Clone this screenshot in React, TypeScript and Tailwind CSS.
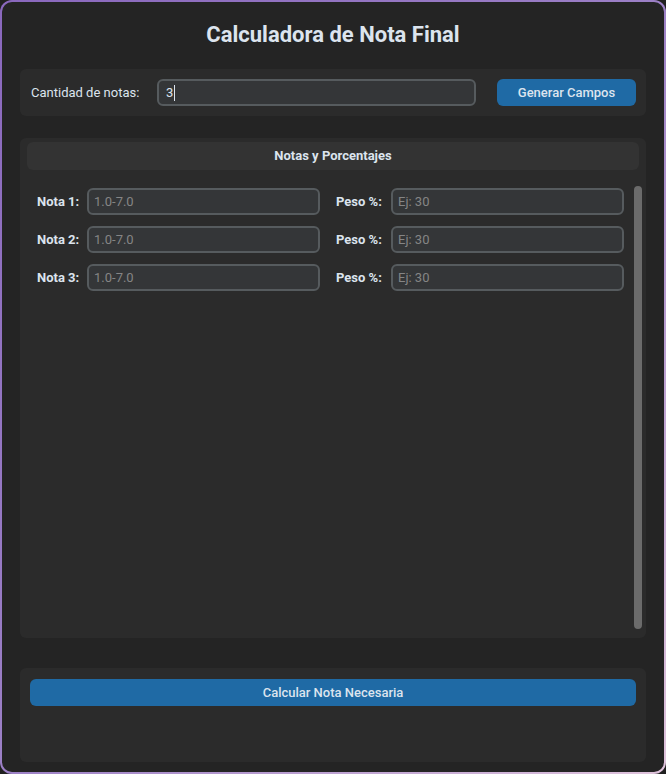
import React from "react";

const font = { fontFamily: "Roboto, 'Noto Sans', 'Liberation Sans', sans-serif" };

function Row({ n }: { n: number }) {
  return (
    <div className="flex h-[27px] items-center">
      <div className="w-[50px] pl-[17px] box-content text-[13px] font-bold text-[#dce4ee] whitespace-nowrap">Nota {n}:</div>
      <div className="ml-0 flex h-[27px] w-[233px] items-center rounded-[6px] border-2 border-[#565b5e] bg-[#343638] pl-[5px] text-[13px] text-[#858585]">1.0-7.0</div>
      <div className="ml-[16px] w-[55px] text-[13px] font-bold text-[#dce4ee] whitespace-nowrap">Peso %:</div>
      <div className="flex h-[27px] w-[233px] items-center rounded-[6px] border-2 border-[#565b5e] bg-[#343638] pl-[5px] text-[13px] text-[#858585]">Ej: 30</div>
    </div>
  );
}

export default function App() {
  return (
    <div className="h-[774px] w-[666px] bg-[#202020]" style={font}>
      <div className="h-full w-full rounded-[12px] bg-gradient-to-br from-[#8a68bd] via-[#9c80c6] to-[#e0c4dc] p-[2px]">
        <div className="flex h-full w-full flex-col rounded-[10px] bg-[#242424] px-[18px]">
          <div className="mt-[18px] flex h-[28px] items-center justify-center text-[22px] font-bold text-[#dce4ee]">
            Calculadora de Nota Final
          </div>

          <div className="mt-[21px] flex h-[47px] items-center rounded-[6px] bg-[#2b2b2b] px-[10px]">
            <div className="w-[127px] pl-[1px] text-[13px] text-[#dce4ee] whitespace-nowrap">Cantidad de notas:</div>
            <div className="flex h-[27px] w-[319px] items-center rounded-[6px] border-2 border-[#565b5e] bg-[#343638] pl-[7px] text-[13px] text-[#dce4ee]">
              3<span className="ml-[1px] inline-block h-[16px] w-[1px] bg-[#dce4ee]" />
            </div>
            <div className="ml-[21px] flex h-[27px] w-[139px] items-center justify-center rounded-[6px] bg-[#1f6aa5] text-[13px] font-medium text-[#dce4ee]">
              Generar Campos
            </div>
          </div>

          <div className="mt-[22px] flex h-[500px] flex-col rounded-[6px] bg-[#2b2b2b] pt-[4px]">
            <div className="mx-[7px] flex h-[28px] items-center justify-center rounded-[6px] bg-[#333333] text-[13px] font-bold text-[#dce4ee]">
              Notas y Porcentajes
            </div>
            <div className="flex flex-1">
              <div className="flex flex-1 flex-col gap-[11px] pt-[18px]">
                <Row n={1} />
                <Row n={2} />
                <Row n={3} />
              </div>
              <div className="mr-[4px] mt-[16px] mb-[9px] w-[8px] rounded-full bg-[#6b6b6b]" />
            </div>
          </div>

          <div className="mt-[30px] h-[94px] rounded-[6px] bg-[#2b2b2b] px-[10px] pt-[11px]">
            <div className="flex h-[27px] items-center justify-center rounded-[6px] bg-[#1f6aa5] text-[13px] font-medium text-[#dce4ee]">
              Calcular Nota Necesaria
            </div>
          </div>
        </div>
      </div>
    </div>
  );
}
